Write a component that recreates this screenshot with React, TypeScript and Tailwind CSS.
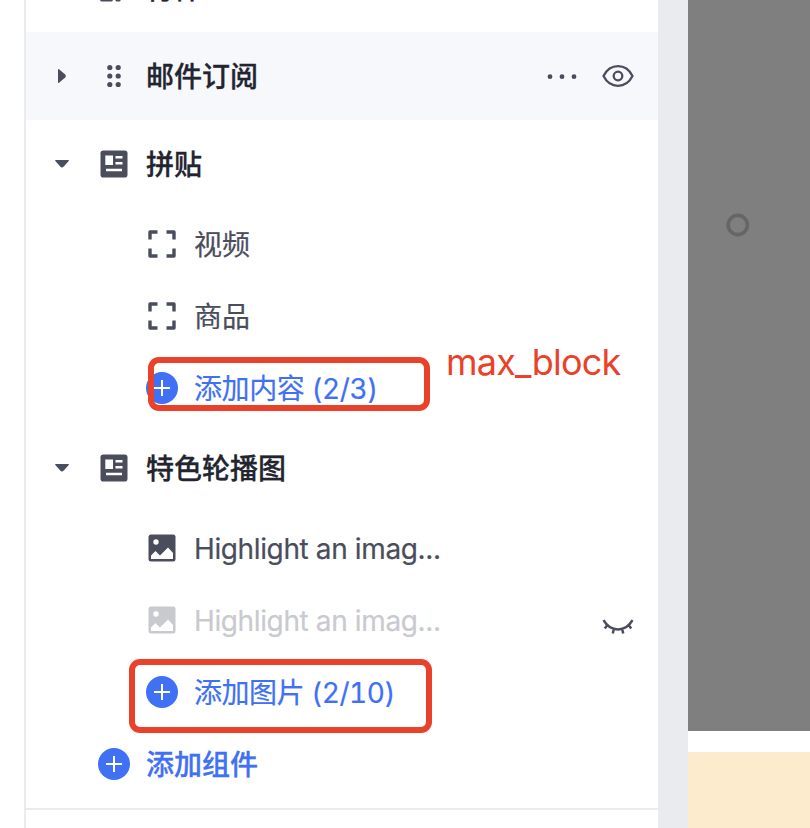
import type { ReactNode } from "react";

const Caret = ({ open = false }: { open?: boolean }) => (
  <svg className="h-6 w-6 shrink-0" viewBox="0 0 24 24" fill="#4a4d5c">
    {open ? (
      <path d="M5.800 8h12.400q1.200 0 .5 1L13.500 14.800q-1.500 1.300-3 0L5.300 9q-.7-1 .5-1z" />
    ) : (
      <path d="M8 5.800v12.400q0 1.200 1 .5L15.200 13.500q1.300-1.500 0-3L9 5.300q-1-.7-1 .5z" />
    )}
  </svg>
);

const Drag = () => (
  <svg className="h-8 w-8" viewBox="0 0 32 32" fill="#4a4d5c">
    {[7.500, 16, 24.500].map((y) => (
      <g key={y}>
        <circle cx="11.800" cy={y} r="2.600" />
        <circle cx="20.200" cy={y} r="2.600" />
      </g>
    ))}
  </svg>
);

const Section = () => (
  <svg className="h-8 w-8" viewBox="0 0 32 32">
    <rect x="2.500" y="2.500" width="27" height="27" rx="2.800" fill="#4a4d5c" />
    <path fill="#fff" d="M7.300 7.500h7.700v9.500H7.300zM17.500 8H24.500v2.500h-7zM17.500 14H24.500v2.500h-7zM8 20.700h16v2.500H8z" />
  </svg>
);

const Stack = () => (
  <svg className="h-8 w-8" viewBox="0 0 32 32" fill="#4a4d5c">
    <rect x="2" y="3" width="13" height="26.500" rx="2" />
    <rect x="17.500" y="3" width="5" height="26.500" rx="1" />
  </svg>
);

const Frame = () => (
  <svg className="h-8 w-8" viewBox="0 0 32 32" fill="none" stroke="#4a4d5c" strokeWidth="3.400" strokeLinejoin="round">
    <path d="M4 11.500V4h7.500M20.500 4H28v7.500M28 20.500V28h-7.500M11.500 28H4v-7.500" />
  </svg>
);

const Picture = ({ faded = false }: { faded?: boolean }) => (
  <svg className="h-8 w-8" viewBox="0 0 32 32">
    <rect x="2.500" y="2.500" width="27" height="27" rx="2.500" fill={faded ? "#c9cacf" : "#4a4d5c"} />
    <circle cx="10" cy="10" r="2.700" fill="#fff" />
    <path fill="#fff" d="M5 23.500 9.500 19l4.500 4.500L22 15.500l5 5.500V27H5z" />
  </svg>
);

const Plus = () => (
  <svg className="h-8 w-8" viewBox="0 0 32 32">
    <circle cx="16" cy="16" r="16" fill="#4070f4" />
    <path d="M8 16h16M16 8v16" stroke="#fff" strokeWidth="2" />
  </svg>
);

const More = () => (
  <svg className="h-8 w-8" viewBox="0 0 32 32" fill="#4a4d5c">
    <circle cx="4" cy="16.700" r="2.400" />
    <circle cx="16" cy="16.700" r="2.400" />
    <circle cx="28" cy="16.700" r="2.400" />
  </svg>
);

const Eye = () => (
  <svg className="h-8 w-8" viewBox="0 0 32 32" fill="none" stroke="#4a4d5c" strokeWidth="2.300">
    <path d="M1.500 16C4.800 9.500 10 6.200 16 6.200S27.200 9.500 30.500 16C27.200 22.500 22 25.800 16 25.800S4.800 22.500 1.500 16z" />
    <circle cx="16" cy="16" r="4.300" />
  </svg>
);

const ClosedEye = () => (
  <svg className="h-8 w-8" viewBox="0 0 32 32" fill="none" stroke="#4a4d5c" strokeWidth="2.500">
    <path d="M1.500 16.200C8.500 28.500 23.500 28.500 30.500 16.200M5.500 20.800 2.800 24.500M11.800 25 10.800 29.500M20.200 25 21.200 29.500M26.500 20.800 29.200 24.500" />
  </svg>
);

type RowProps = {
  icon: ReactNode;
  label: string;
  toggle?: ReactNode;
  actions?: ReactNode;
  className?: string;
  labelClass?: string;
};

const SectionRow = ({ icon, label, toggle, actions, className = "h-22 text-[#22242f]" }: RowProps) => (
  <div className={`flex shrink-0 items-center pl-6 pr-6 font-medium [-webkit-text-stroke:0.3px] ${className}`}>
    <div className="mr-6 w-6 shrink-0">{toggle}</div>
    {icon}
    <span className="ml-4 pt-0.5">{label}</span>
    <div className="ml-auto flex gap-6">{actions}</div>
  </div>
);

const BlockRow = ({ icon, label, actions, className = "text-[#4a4d5c]", labelClass = "" }: RowProps) => (
  <div className={`flex h-18 shrink-0 items-center pl-30 pr-6 [-webkit-text-stroke:0.2px] ${className}`}>
    {icon}
    <span className={`ml-4 ${labelClass}`}>{label}</span>
    <div className="ml-auto">{actions}</div>
  </div>
);

export default function App() {
  return (
    <div className="relative flex h-[828px] w-[810px] overflow-hidden bg-white font-['Inter','Noto_Sans_CJK_SC',sans-serif] text-[28px] leading-10 whitespace-nowrap">
      <aside className="ml-6 flex w-[634px] shrink-0 flex-col border-l-2 border-[#ebebed]">
        <div className="-mt-14 flex flex-col">
          <SectionRow icon={<Stack />} label="行件" />
          <SectionRow
            className="h-22 bg-[#f6f8fc] text-[#22242f]"
            toggle={<Caret />}
            icon={<Drag />}
            label="邮件订阅"
            actions={<><More /><Eye /></>}
          />
          <SectionRow toggle={<Caret open />} icon={<Section />} label="拼贴" />
          <BlockRow icon={<Frame />} label="视频" labelClass="pt-0.5" />
          <BlockRow icon={<Frame />} label="商品" labelClass="pt-0.5" />
          <BlockRow className="text-[#4070f4]" icon={<Plus />} label="添加内容 (2/3)" labelClass="pt-0.5 tabular-nums tracking-[-0.4px]" />
          <SectionRow toggle={<Caret open />} icon={<Section />} label="特色轮播图" />
          <BlockRow icon={<Picture />} label="Highlight an imag..." labelClass="pt-px tracking-[-0.38px]" />
          <BlockRow className="text-[#c9cacf]" icon={<Picture faded />} label="Highlight an imag..." labelClass="pt-px tracking-[-0.38px]" actions={<ClosedEye />} />
          <BlockRow className="text-[#4070f4]" icon={<Plus />} label="添加图片 (2/10)" labelClass="pt-0.5 tabular-nums tracking-[-0.45px]" />
          <SectionRow className="h-18 text-[#4070f4]" icon={<Plus />} label="添加组件" />
        </div>
        <div className="mt-2 h-0.5 shrink-0 bg-[#ebebed]" />
      </aside>
      <div className="w-[30px] shrink-0 bg-[#eaebef]" />
      <main className="flex flex-1 flex-col">
        <div className="h-[731px] bg-[#7f7f7f] pt-[213px] pl-[38px]">
          <svg className="h-6 w-6" viewBox="0 0 24 24" fill="none" stroke="#666" strokeWidth="3.700">
            <circle cx="11.800" cy="12" r="9.600" />
          </svg>
        </div>
        <div className="mt-[21px] flex-1 bg-[#fcebcc]" />
      </main>

      <div className="absolute left-[148px] top-[357px] h-[54px] w-[282px] rounded-[11px] border-6 border-[#e9412a]" />
      <div className="absolute left-[129px] top-[659px] h-[74px] w-[303px] rounded-[11px] border-6 border-[#e9412a]" />
      <span className="absolute left-[446px] top-[342px] text-[36px] tracking-[-0.8px] text-[#e9412a]">max_block</span>
    </div>
  );
}
